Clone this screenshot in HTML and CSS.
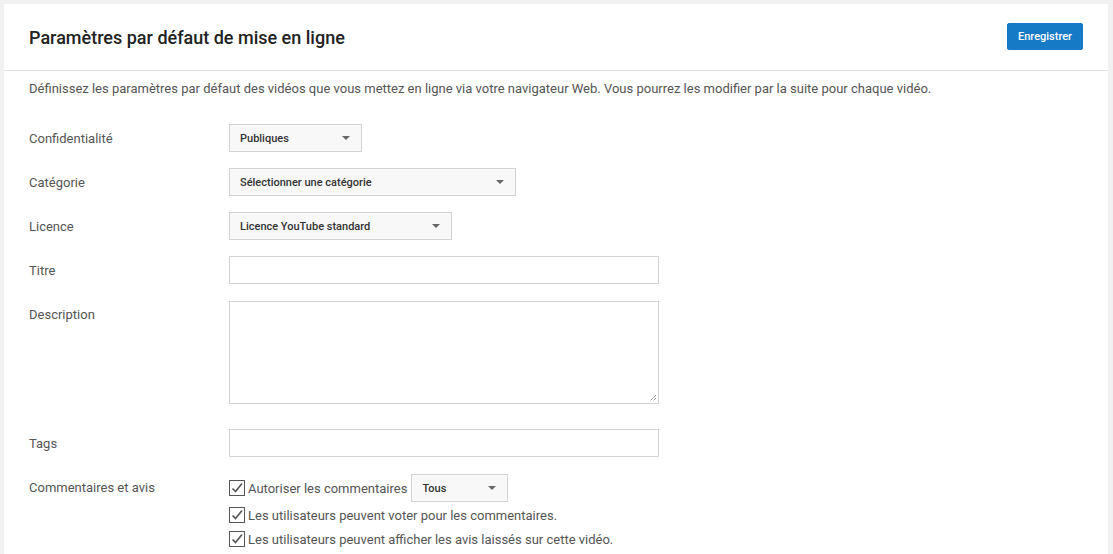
FILE: index.html
```html
<!DOCTYPE html>
<html lang="fr">
<head>
<meta charset="utf-8">
<link rel="stylesheet" href="styles.css">
</head>
<body>
<div class="card">
  <div class="header">
    <h1 class="title">Paramètres par défaut de mise en ligne</h1>
    <button class="save">Enregistrer</button>
  </div>
  <div class="content">
    <p class="intro">Définissez les paramètres par défaut des vidéos que vous mettez en ligne via votre navigateur Web. Vous pourrez les modifier par la suite pour chaque vidéo.</p>
    <div class="form">
      <div class="row">
        <div class="label">Confidentialité</div>
        <div class="select w-priv"><span>Publiques</span><i class="caret"></i></div>
      </div>
      <div class="row">
        <div class="label">Catégorie</div>
        <div class="select w-cat"><span>Sélectionner une catégorie</span><i class="caret"></i></div>
      </div>
      <div class="row">
        <div class="label">Licence</div>
        <div class="select w-lic"><span>Licence YouTube standard</span><i class="caret"></i></div>
      </div>
      <div class="row">
        <div class="label">Titre</div>
        <div class="input"></div>
      </div>
      <div class="row row-top">
        <div class="label label-top">Description</div>
        <div class="textarea"><svg class="grip" width="8" height="8" viewBox="0 0 8 8"><path d="M7 1L1 7M7 4L4 7M7 7L7 7" stroke="#777" stroke-width="1" stroke-dasharray="1 1" fill="none"/></svg></div>
      </div>
      <div class="row row-tags">
        <div class="label">Tags</div>
        <div class="input"></div>
      </div>
      <div class="row row-comments">
        <div class="label label-comments">Commentaires et avis</div>
        <div class="checks">
          <div class="check-line">
            <span class="box"><svg width="14" height="14" viewBox="0 0 14 14"><path d="M2.5 7.5L5.5 10.5L12 2.5" stroke="#555" stroke-width="1.6" fill="none"/></svg></span>
            <span class="check-text">Autoriser les commentaires</span>
            <div class="select w-tous"><span>Tous</span><i class="caret"></i></div>
          </div>
          <div class="check-line">
            <span class="box"><svg width="14" height="14" viewBox="0 0 14 14"><path d="M2.5 7.5L5.5 10.5L12 2.5" stroke="#555" stroke-width="1.6" fill="none"/></svg></span>
            <span class="check-text">Les utilisateurs peuvent voter pour les commentaires.</span>
          </div>
          <div class="check-line">
            <span class="box"><svg width="14" height="14" viewBox="0 0 14 14"><path d="M2.5 7.5L5.5 10.5L12 2.5" stroke="#555" stroke-width="1.6" fill="none"/></svg></span>
            <span class="check-text">Les utilisateurs peuvent afficher les avis laissés sur cette vidéo.</span>
          </div>
        </div>
      </div>
    </div>
  </div>
</div>
</body>
</html>
```

FILE: styles.css
```css
* { box-sizing: border-box; }
html, body { margin: 0; padding: 0; }
body {
  background: #f1f1f1;
  font-family: Roboto, "Liberation Sans", Arial, sans-serif;
  color: #333;
  height: 554px;
  overflow: hidden;
}
.card {
  margin: 4px 0 0 4px;
  width: 1104px;
  background: #fff;
  height: 560px;
}
.header {
  height: 67px;
  border-bottom: 1px solid #e2e2e2;
  display: flex;
  align-items: center;
  justify-content: space-between;
  padding: 0 25px;
}
.title {
  margin: 0;
  font-size: 18px;
  font-weight: 500;
  color: #222;
  padding-top: 0;
}
.save {
  background: #167ac6;
  color: #fff;
  border: 1px solid #167ac6;
  border-radius: 2px;
  font-family: Roboto, "Liberation Sans", Arial, sans-serif;
  font-size: 11px;
  font-weight: 500;
  height: 27px;
  width: 76px;
  padding: 0;
  margin-top: -1px;
}
.content {
  padding: 9px 25px 0;
}
.intro {
  margin: 0;
  font-size: 13px;
  line-height: 18px;
  color: #555;
}
.form {
  margin-top: 26px;
  display: flex;
  flex-direction: column;
  gap: 16px;
}
.row {
  display: flex;
  align-items: center;
}
.row-top { align-items: flex-start; margin-top: 1px; }
.row-tags { margin-top: 9px; }
.row-comments { align-items: flex-start; margin-top: 1px; }
.label {
  width: 200px;
  flex: none;
  font-size: 13px;
  color: #555;
}
.label-top { padding-top: 6px; }
.label-comments { padding-top: 6px; }
.select {
  height: 28px;
  border: 1px solid #d3d3d3;
  background: #f8f8f8;
  display: flex;
  align-items: center;
  justify-content: space-between;
  padding: 0 10px 0 10px;
  font-size: 11px;
  font-weight: 500;
  color: #333;
}
.w-priv { width: 133px; }
.w-cat { width: 287px; }
.w-lic { width: 223px; }
.w-tous { width: 97px; margin-left: 4px; }
.caret {
  width: 0;
  height: 0;
  border-left: 4px solid transparent;
  border-right: 4px solid transparent;
  border-top: 4px solid #666;
  margin-right: 1px;
}
.input {
  width: 430px;
  height: 28px;
  border: 1px solid #d3d3d3;
  background: #fff;
}
.textarea {
  width: 430px;
  height: 103px;
  border: 1px solid #d3d3d3;
  background: #fff;
  position: relative;
}
.grip {
  position: absolute;
  right: 1px;
  bottom: 1px;
}
.checks {
  display: flex;
  flex-direction: column;
}
.check-line {
  display: flex;
  align-items: center;
  height: 24px;
}
.check-line:first-child { height: 28px; margin-bottom: 1px; }
.box {
  width: 16px;
  height: 16px;
  border: 1px solid #555;
  display: flex;
  align-items: center;
  justify-content: center;
  margin-right: 3px;
  background: #fff;
}
.box svg { display: block; }
.check-text {
  font-size: 13px;
  color: #555;
}
```
